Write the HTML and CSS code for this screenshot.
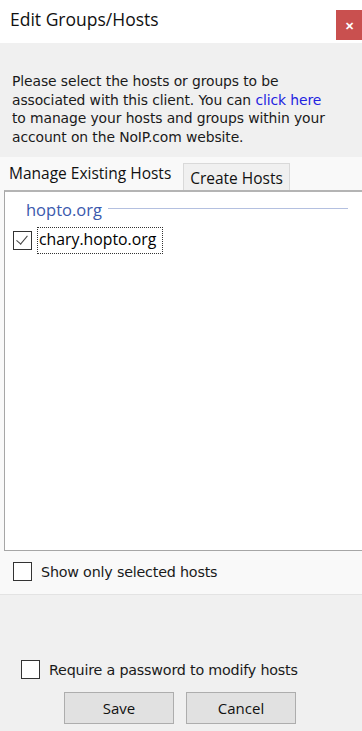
FILE: index.html
```html
<!DOCTYPE html>
<html lang="en">
<head>
    <meta charset="utf-8"/>
    <title>Edit Groups/Hosts</title>
    <link rel="stylesheet" href="styles.css">
</head>
<body>
<div class="titlebar">
    <span class="title">Edit Groups/Hosts</span>
    <span class="closebtn">&#x2715;</span>
</div>

<div class="intro">
    <p>Please select the hosts or groups to be<br>associated with this client. You can <a href="#" class="link">click here</a><br>to manage your hosts and groups within your<br>account on the NoIP.com website.</p>
</div>

<div class="tabarea">
    <div class="tabs">
        <span class="tab active">Manage Existing Hosts</span>
        <span class="tab">Create Hosts</span>
    </div>
    <div class="panel">
        <div class="group">
            <span class="groupname">hopto.org</span>
            <span class="groupline"></span>
        </div>
        <div class="hostrow">
            <input type=checkbox id=h1 checked><label class="chk" for=h1></label>
            <span class="hostname">chary.hopto.org</span>
        </div>
    </div>

    <div class="option">
        <input type=checkbox id=onlysel><label class="chk" for=onlysel></label>
        <span class="optlbl">Show only selected hosts</span>
    </div>
</div>

<div class="footer">
    <div class="option pw">
        <input type=checkbox id=pw><label class="chk" for=pw></label>
        <span class="optlbl">Require a password to modify hosts</span>
    </div>
    <div class="buttons">
        <button class="btn">Save</button>
        <button class="btn">Cancel</button>
    </div>
</div>
</body>
</html>
```

FILE: styles.css
```css
body {
    margin: 0;
    padding: 0;
    background-color: #f0f0f0;
    font-family: "Open Sans", "Noto Sans", sans-serif;
    color: #000;
    overflow: hidden;
}

.titlebar {
    height: 43px;
    background-color: #fff;
    display: flex;
    align-items: flex-start;
    justify-content: space-between;
}

.title {
    font-size: 17.5px;
    margin: 7px 0 0 10px;
    color: #111;
}

.closebtn {
    width: 26px;
    height: 30px;
    margin-top: 10px;
    background-color: #c9504f;
    color: #fff;
    font-size: 11px;
    font-weight: bold;
    display: flex;
    align-items: center;
    justify-content: center;
}

.intro {
    height: 114px;
    overflow: hidden;
}

.intro p {
    margin: 29px 0 0 12px;
    font-family: "DejaVu Sans", sans-serif;
    font-size: 13.9px;
    line-height: 18.5px;
    letter-spacing: -0.1px;
    color: #1a1a1a;
}

.link {
    color: #2323e0;
    text-decoration: none;
}

.tabarea {
    background-color: #f9f9f9;
    border-bottom: 1px solid #e3e3e3;
    height: 437px;
}

.tabs {
    display: flex;
    align-items: flex-end;
    height: 33px;
}

.tab {
    font-size: 15.5px;
    border: 1px solid #d9d9d9;
    border-bottom: none;
    background-color: #f0f0f0;
    height: 27px;
    line-height: 28px;
    padding: 0 6px;
    color: #111;
    box-sizing: border-box;
    width: 107px;
    text-align: center;
}

.tab.active {
    background-color: #f9f9f9;
    border: none;
    height: 33px;
    line-height: 32px;
    width: 183px;
    padding: 0 0 0 9px;
    text-align: left;
}

.panel {
    background-color: #fff;
    border: 1px solid #a6a6a6;
    border-top: 2px solid #b4b4b4;
    border-right: none;
    margin-left: 4px;
    height: 350px;
    padding-top: 8px;
}

.group {
    display: flex;
    align-items: center;
    margin: 0 14px 0 21px;
    height: 20px;
}

.groupname {
    font-size: 16.5px;
    color: #3a59ad;
    font-weight: 500;
    line-height: 20px;
}

.groupline {
    flex: 1;
    height: 1px;
    background-color: #b4c0e0;
    margin: -3px 0 0 6px;
}

.hostrow {
    display: flex;
    align-items: center;
    margin: 7px 0 0 8px;
}

.hostname {
    font-size: 15.8px;
    border: 1px dotted #333;
    padding: 1px 6px 4px 1px;
    margin-left: 5px;
    line-height: 20px;
}

input[type=checkbox] {
    display: none;
}

.chk {
    display: inline-block;
    position: relative;
    width: 17px;
    height: 17px;
    border: 1px solid #333;
    background-color: #fff;
    flex: none;
}

input[type=checkbox]:checked + .chk:after {
    content: '';
    position: absolute;
    left: 5px;
    top: 1px;
    width: 5px;
    height: 10px;
    border-right: 1.5px solid #444;
    border-bottom: 1.5px solid #444;
    transform: rotate(40deg);
}

.option {
    display: flex;
    align-items: center;
    margin: 11px 0 0 13px;
}

.optlbl {
    font-family: "DejaVu Sans", sans-serif;
    font-size: 14.3px;
    letter-spacing: -0.2px;
    margin-left: 9px;
    color: #1a1a1a;
}

.footer {
    padding-top: 65px;
}

.option.pw {
    margin: 0 0 0 21px;
}

.buttons {
    display: flex;
    gap: 12px;
    margin: 13px 0 0 64px;
}

.btn {
    width: 110px;
    height: 32px;
    background-color: #e1e1e1;
    border: 1px solid #adadad;
    font-family: "Open Sans", sans-serif;
    font-size: 15px;
    color: #111;
    padding: 0;
}
```
